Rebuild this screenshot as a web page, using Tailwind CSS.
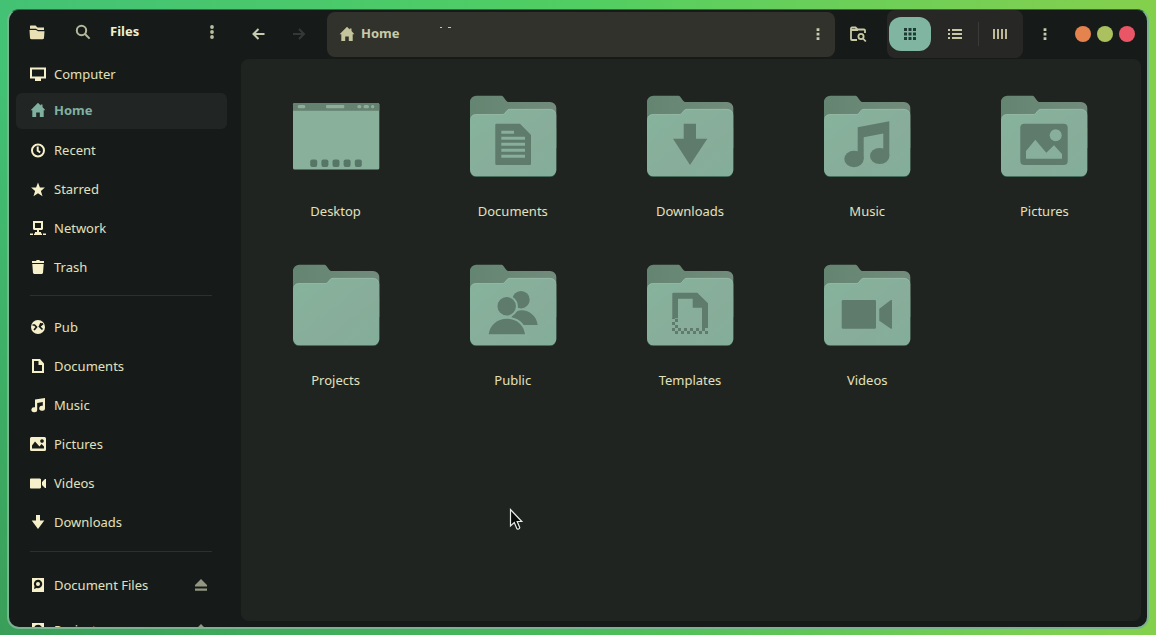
<!DOCTYPE html>
<html lang="en">
<head>
<meta charset="utf-8">
<title>Files</title>
<script src="https://cdn.jsdelivr.net/npm/@tailwindcss/browser@4"></script>
</head>
<body class="h-screen overflow-hidden bg-linear-to-r from-[#43c275] via-[#50ce62] to-[#84d04c] font-['Noto_Sans',sans-serif] text-[13px] leading-[18px] text-[#e2e1bd]">
<svg class="absolute size-0" aria-hidden="true">
  <defs>
    <linearGradient id="back" x1="0" x2="1"><stop offset="0" stop-color="#648571"/><stop offset="1" stop-color="#728b7c"/></linearGradient>
    <linearGradient id="front" x1="0" x2="1" y2="1"><stop offset="0" stop-color="#86b39c"/><stop offset=".6" stop-color="#88ad9a"/><stop offset="1" stop-color="#83ae99"/></linearGradient>
    <pattern id="check" x="30" y="59" width="6" height="6" patternUnits="userSpaceOnUse"><path fill="#5e7b6c" d="M0 0h3v3H0zM3 3h3v3H3z"/></pattern>
  </defs>
  <symbol id="folder" viewBox="0 0 96 96">
    <path fill="#33594a" d="M5 40h86.300v42.700a6.300 6.300 0 0 1-6.300 6.300H11.300A6.300 6.300 0 0 1 5 82.700z"/>
    <path fill="url(#back)" d="M5 14a6.300 6.300 0 0 1 6.300-6.300H36c1.500 0 2 .6 2.800 1.700l2 2.800c.9 1.200 1.600 1.800 3 1.800H85a6.300 6.300 0 0 1 6.300 6.300V60H5z"/>
    <path fill="url(#front)" d="M5 32a5.800 5.800 0 0 1 5.800-5.800H37c1.500 0 2.200-.5 3-1.500l2-2.300c.9-1 1.600-1.400 3-1.400h40a6.300 6.300 0 0 1 6.300 6.300V82a6.300 6.300 0 0 1-6.300 6.300H11.300A6.300 6.300 0 0 1 5 82z"/>
    <path fill="none" stroke="#9bbda9" stroke-width=".7" d="M6 29.500a5 5 0 0 1 4.800-3H37c1.500 0 2.200-.5 3-1.500l2-2.300c.9-1 1.600-1.400 3-1.400h40a6 6 0 0 1 5.500 3.500"/>
  </symbol>
  <symbol id="home" viewBox="0 0 16 16"><path fill="currentColor" d="M8 .8 .6 8.200h1.700V15h3.900v-4.500h3.600V15h3.900V8.200h1.700L12.500 5V2.500h-1.800v.9z"/></symbol>
  <symbol id="notes" viewBox="0 0 16 16"><path fill="currentColor" d="M5 2.500 15 1v10.200a2.900 2.500 0 1 1-2.200-2.400V5L7.200 6v6.700A2.900 2.500 0 1 1 5 10.300z"/></symbol>
  <symbol id="disk" viewBox="0 0 16 16"><path fill="currentColor" fill-rule="evenodd" d="M2 1h12v14H2zM8 2.800a4.200 4.200 0 0 0-3.500 6.500L4 12l2.800-1A4.200 4.200 0 1 0 8 2.800zM8 5a2 2 0 1 1 0 4 2 2 0 0 1 0-4z"/></symbol>
  <symbol id="eject" viewBox="0 0 16 16"><path fill="currentColor" d="M8 2 14 8v1.500H2V8zM2 11.500h12v2.200H2z"/></symbol>
  <symbol id="dots" viewBox="0 0 16 16"><g fill="currentColor"><circle cx="8" cy="3" r="1.900"/><circle cx="8" cy="8" r="1.900"/><circle cx="8" cy="13" r="1.900"/></g></symbol>
  <symbol id="dots-small" viewBox="0 0 16 16"><path fill="currentColor" d="M6.600 2.200h2.800V5H6.600zM6.600 6.800h2.800v2.700H6.600zM6.600 11.200h2.800V14H6.600z"/></symbol>
</svg>

<div class="h-full bg-linear-to-bl from-transparent from-55% to-[#2f7a3c]/50 pt-[9px] pr-[7px] pb-[6px] pl-[7px]">
<div class="flex h-full overflow-hidden rounded-xl border-2 border-t border-[#79b491] border-t-[#2c6a4d] bg-[#161b1a]">

  <aside class="flex w-[232px] shrink-0 flex-col">
    <header class="mb-[2px] flex h-11 shrink-0 items-center pl-5">
      <svg class="size-4 text-[#e9e1b5]" viewBox="0 0 16 16"><path fill="currentColor" d="M1.500 1.500h5l2 2H15V6H9L7 4.800H1V2zM.5 6H7l2 1.200h6.500L15 14a1.500 1.500 0 0 1-1.500 1.300h-11A1.500 1.500 0 0 1 1 14z"/></svg>
      <button class="ml-[30px] text-[#b3b79b]" aria-label="Search"><svg class="size-4" viewBox="0 0 16 16" fill="none" stroke="currentColor" stroke-width="2"><circle cx="6.500" cy="6.500" r="4.700"/><path d="m10 10 4.600 4.600"/></svg></button>
      <h1 class="ml-[19px] pb-[2px] font-bold text-[#f0f0cc]">Files</h1>
      <button class="mr-[21px] ml-auto text-[#b9bda0]" aria-label="Menu"><svg class="size-4"><use href="#dots"/></svg></button>
    </header>
    <nav class="min-h-0 flex-1 overflow-hidden pr-[14px] pl-[7px]" aria-label="Places">
      <ul class="flex flex-col gap-[3px] text-[#e2e1bd] [&_svg]:size-4 [&_svg]:shrink-0">
        <li class="-mb-[2px]"><a href="#" class="flex h-9 items-center gap-2 px-[14px]"><svg class="text-[#f6f0ca]" viewBox="0 0 16 16"><path fill="currentColor" fill-rule="evenodd" d="M0 1.500h16v11h-5V15H5v-2.500H0zM2 3.500v7h12v-7z"/></svg>Computer</a></li>
        <li><a href="#" aria-current="page" class="flex h-9 items-center gap-2 rounded-md bg-[#212524] px-[14px] pb-[2px] font-bold text-[#80b1a0]"><svg><use href="#home"/></svg>Home</a></li>
        <li><a href="#" class="flex h-9 items-center gap-2 px-[14px] pb-px"><svg class="text-[#f6f0ca]" viewBox="0 0 16 16" fill="none" stroke="currentColor" stroke-width="2"><circle cx="8" cy="8.500" r="6"/><path d="M7.700 4.500v4.300l2.500 1.500"/></svg>Recent</a></li>
        <li><a href="#" class="flex h-9 items-center gap-2 px-[14px] pb-px"><svg class="text-[#f6f0ca]" viewBox="0 0 16 16"><path fill="currentColor" d="m8 1.500 1.900 5h5l-4 3.400 1.600 5.300L8 12.200l-4.500 3 1.600-5.300-4-3.400h5z"/></svg>Starred</a></li>
        <li><a href="#" class="flex h-9 items-center gap-2 px-[14px] pb-px"><svg class="text-[#f6f0ca]" viewBox="0 0 16 16"><path fill="currentColor" fill-rule="evenodd" d="M3 1h10v8l-1 1H9v2h2v1.500h1V15H4v-1.500h1V12h2v-2H4L3 9zM5 3v5h6V3zM0 13.500h3V15H0zM13 13.500h3V15h-3z"/></svg>Network</a></li>
        <li><a href="#" class="flex h-9 items-center gap-2 px-[14px]"><svg class="text-[#f6f0ca]" viewBox="0 0 16 16"><path fill="currentColor" d="M2 2h4l.7-1h2.600l.7 1h4v2H2zM2.300 5h11.400l-.7 9-1 1H4l-1-1z"/></svg>Trash</a></li>
      </ul>
      <hr class="mt-[10px] mr-[15px] mb-[13px] ml-[14px] border-[#2c302e]">
      <ul class="flex flex-col gap-[3px] [&_svg]:size-4 [&_svg]:shrink-0 [&_svg]:text-[#f6f0ca]">
        <li><a href="#" class="flex h-9 items-center gap-2 px-[14px]"><svg viewBox="0 0 16 16"><circle cx="8" cy="8" r="7" fill="currentColor"/><path fill="none" stroke="#161b1a" stroke-width="1.700" d="M2.500 6h2l2 2-2 2.500M13 4.500l-3.500 3 3 3M6.500 8 4 11M9.500 7.500 11 4"/></svg>Pub</a></li>
        <li><a href="#" class="flex h-9 items-center gap-2 px-[14px]"><svg viewBox="0 0 16 16"><path fill="currentColor" fill-rule="evenodd" d="M2 1h8l4 4.500V15H2zM4 3v10h8V7H8.500V3z"/></svg>Documents</a></li>
        <li><a href="#" class="flex h-9 items-center gap-2 px-[14px]"><svg><use href="#notes"/></svg>Music</a></li>
        <li><a href="#" class="flex h-9 items-center gap-2 px-[14px]"><svg viewBox="0 0 16 16"><path fill="currentColor" fill-rule="evenodd" d="M1.500 1h13A1.500 1.500 0 0 1 16 2.500v11a1.500 1.500 0 0 1-1.500 1.500h-13A1.500 1.500 0 0 1 0 13.500v-11A1.500 1.500 0 0 1 1.500 1zM2 12.500h12V10.500l-2.500-2.500L9.500 10.500 5 5.500 2 9.500zM12 3.200a1.800 1.800 0 1 0 .01 0z"/></svg>Pictures</a></li>
        <li><a href="#" class="flex h-9 items-center gap-2 px-[14px]"><svg viewBox="0 0 16 16"><path fill="currentColor" d="M.5 3.500H10l1 .8v8.400l-1 .8H.5L0 12.700V4.300zM12 7l3-3h1v9h-1l-3-3z"/></svg>Videos</a></li>
        <li><a href="#" class="flex h-9 items-center gap-2 px-[14px]"><svg viewBox="0 0 16 16"><path fill="currentColor" d="M6 1h4v5.500h4.300L8 15 1.700 6.500H6z"/></svg>Downloads</a></li>
      </ul>
      <hr class="mt-[11px] mr-[15px] mb-[15px] ml-[14px] border-[#2c302e]">
      <ul class="flex flex-col gap-[9px] [&_svg]:size-4 [&_svg]:shrink-0">
        <li class="flex h-9 items-center px-[14px]"><a href="#" class="flex flex-1 items-center gap-2"><svg class="text-[#f6f0ca]"><use href="#disk"/></svg>Document Files</a><button class="mr-1 text-[#939680]" aria-label="Eject Document Files"><svg><use href="#eject"/></svg></button></li>
        <li class="flex h-9 items-center px-[14px]"><a href="#" class="flex flex-1 items-center gap-2"><svg class="text-[#f6f0ca]"><use href="#disk"/></svg>Projects</a><button class="mr-1 text-[#939680]" aria-label="Eject Projects"><svg><use href="#eject"/></svg></button></li>
      </ul>
    </nav>
  </aside>

  <div class="flex min-w-0 flex-1 flex-col pr-[6px] pb-[6px]">
    <header class="mb-px flex h-12 shrink-0 items-center">
      <button class="flex size-9 items-center justify-center text-[#c6cbb0]" aria-label="Back"><svg class="size-4" viewBox="0 0 16 16" fill="none" stroke="currentColor" stroke-width="2"><path d="M13.500 8H3M7.500 3l-5 5 5 5"/></svg></button>
      <button class="ml-1 flex size-9 items-center justify-center text-[#343937]" aria-label="Forward" disabled><svg class="size-4" viewBox="0 0 16 16" fill="none" stroke="currentColor" stroke-width="2"><path d="M2 8h10.500M8 3l5 5-5 5"/></svg></button>
      <div class="relative ml-[10px] flex h-[45px] flex-1 items-center rounded-lg bg-[#32322d] pr-[9px] pl-3">
        <svg class="size-4 text-[#c4c49d]"><use href="#home"/></svg>
        <span class="ml-[6px] pb-[2px] font-bold text-[#c8cba8]">Home</span>
        <svg class="absolute top-[15px] left-[113px] h-px w-[11px]" viewBox="0 0 11 1"><path fill="#c8cba8" d="M0 0h2v1H0zM8 0h3v1H8z"/></svg>
        <button class="ml-auto text-[#c6cbb0]" aria-label="Location menu"><svg class="size-4"><use href="#dots-small"/></svg></button>
      </div>
      <button class="ml-[14px] text-[#c9cba3]" aria-label="Search folders"><svg class="size-[18px]" viewBox="0 0 18 18" fill="none" stroke="currentColor" stroke-width="1.800"><path d="M8 15H3a1 1 0 0 1-1-1V3.500a1 1 0 0 1 1-1h3.500l2 2H15a1 1 0 0 1 1 1V8"/><circle cx="12" cy="11.500" r="2.600"/><path d="m14 13.500 2.800 3M2 5h7"/></svg></button>
      <div class="ml-5 flex h-12 w-[136px] shrink-0 items-center rounded-lg bg-[#272726] pl-[2px]">
        <button class="flex h-[34px] w-[42px] items-center justify-center rounded-xl bg-[#80b5a2] text-[#1f3a33]" aria-label="Icon view" aria-pressed="true"><svg class="size-4" viewBox="0 0 16 16"><path fill="currentColor" d="M2 2h3v3H2zM6.500 2h3v3h-3zM11 2h3v3h-3zM2 6.500h3v3H2zM6.500 6.500h3v3h-3zM11 6.500h3v3h-3zM2 11h3v3H2zM6.500 11h3v3h-3zM11 11h3v3h-3z"/></svg></button>
        <button class="flex h-[34px] w-[47px] items-center justify-center text-[#c6c8a4]" aria-label="List view"><svg class="size-4" viewBox="0 0 16 16"><path fill="currentColor" d="M1 3h2v2H1zM5 3h10v2H5zM1 7h2v2H1zM5 7h10v2H5zM1 11h2v2H1zM5 11h10v2H5z"/></svg></button>
        <span class="h-6 w-px bg-[#3b3c38]"></span>
        <button class="flex h-[34px] w-[42px] items-center justify-center text-[#bdb994]" aria-label="Column view"><svg class="size-4" viewBox="0 0 16 16"><path fill="currentColor" d="M1 3h2v10H1zM5 3h2v10H5zM9 3h2v10H9zM13 3h2v10h-2z"/></svg></button>
      </div>
      <button class="ml-[14px] text-[#c6cbb0]" aria-label="More options"><svg class="size-4"><use href="#dots-small"/></svg></button>
      <div class="mr-[6px] ml-[22px] flex gap-[6px]">
        <button class="size-4 rounded-full bg-[#e5834f]" aria-label="Minimize"></button>
        <button class="size-4 rounded-full bg-[#abc15f]" aria-label="Maximize"></button>
        <button class="size-4 rounded-full bg-[#ea5666]" aria-label="Close"></button>
      </div>
    </header>

    <main class="min-h-0 flex-1 overflow-hidden rounded-lg bg-[#202421] pt-[29px] pr-2 pl-[6px]">
      <ul class="grid grid-cols-5 [&_a]:flex [&_a]:flex-col [&_a]:items-center [&_a]:gap-[18px] [&_a]:pb-[37px] [&_svg]:size-24">
        <li><a href="#"><svg viewBox="0 0 96 96"><rect x="5" y="15" width="86.300" height="66.500" rx="1.500" fill="#88b09b"/><path fill="#64826f" d="M5 22.700V16.500A1.500 1.500 0 0 1 6.500 15h83.300a1.500 1.500 0 0 1 1.500 1.500v6.200z"/><g fill="#8eae9b"><rect x="9.700" y="17" width="7.600" height="3.300" rx="1.500"/><rect x="38" y="17" width="18.300" height="3.300" rx="1"/><rect x="69.300" y="17" width="4" height="3.300" rx="1.500"/><rect x="75.500" y="17" width="5.500" height="3.300" rx="1.500"/><rect x="83" y="17" width="3.300" height="3.300" rx="1.500"/></g><g fill="#577766"><rect x="22.200" y="71.500" width="7" height="7.500" rx="2"/><rect x="33.400" y="71.500" width="7" height="7.500" rx="2"/><rect x="44.500" y="71.500" width="7" height="7.500" rx="2"/><rect x="55.600" y="71.500" width="7" height="7.500" rx="2"/><rect x="66.800" y="71.500" width="7" height="7.500" rx="2"/></g></svg>Desktop</a></li>
        <li><a href="#"><svg viewBox="0 0 96 96"><use href="#folder"/><path fill="#5e7b6c" d="M31.500 35.700H55L66 47v29a1 1 0 0 1-1 1H31.500a1.200 1.200 0 0 1-1.200-1.200V37a1.200 1.200 0 0 1 1.200-1.300z"/><path stroke="#88af9b" stroke-width="3" d="M36.300 44.300H49M36.300 50.300H60M36.300 56.300H60M36.300 62.300H60M36.300 68.300H60"/></svg>Documents</a></li>
        <li><a href="#"><svg viewBox="0 0 96 96"><use href="#folder"/><path fill="#5e7b6c" d="M41.700 35.700H54v15h11.300L48 77 31 50.700h10.700z"/></svg>Downloads</a></li>
        <li><a href="#"><svg viewBox="0 0 96 96"><use href="#folder"/><g fill="#5e7b6c"><ellipse cx="35" cy="71" rx="9.700" ry="8.200"/><ellipse cx="60.700" cy="68" rx="9.700" ry="8"/><path d="M38.700 39.300 70.300 33.300V68h-6V45.500L44.700 49.300V71h-6z"/></g></svg>Music</a></li>
        <li><a href="#"><svg viewBox="0 0 96 96"><use href="#folder"/><rect x="24.300" y="35.700" width="47.400" height="41.300" rx="4" fill="#5e7b6c"/><g fill="#88af9b"><circle cx="59.700" cy="47.300" r="6"/><path d="M30 70.700V63l9.300-11.300 11 13L58 57.300l8 8.700v4.700z"/></g></svg>Pictures</a></li>
        <li><a href="#"><svg viewBox="0 0 96 96"><use href="#folder"/></svg>Projects</a></li>
        <li><a href="#"><svg viewBox="0 0 96 96"><use href="#folder"/><g fill="#5e7b6c"><circle cx="56" cy="42.700" r="8.700"/><path d="M45 68c0-9 5-14.700 12-14.700S71.500 59 72.700 68z"/></g><g fill="#5e7b6c" stroke="#88af9b" stroke-width="4" paint-order="stroke"><path d="M23.700 77.300c1-9 8.300-15.600 18.200-15.600S59 68.300 60 77.300z"/><circle cx="41.700" cy="49.300" r="9.200"/></g></svg>Public</a></li>
        <li><a href="#"><svg viewBox="0 0 96 96"><use href="#folder"/><path fill="#5e7b6c" d="M30.300 61.300V37a1.300 1.300 0 0 1 1.300-1.300H55.300L66 46.300V71h-6V50.700h-9.300v-9H36v19.600z"/><path fill="url(#check)" d="M30 61h6v10h30v6H30z"/></svg>Templates</a></li>
        <li><a href="#"><svg viewBox="0 0 96 96"><use href="#folder"/><path fill="#5e7b6c" d="M24 43h31.700a1.300 1.300 0 0 1 1.300 1.300v26.100a1.300 1.300 0 0 1-1.300 1.300H24a1.300 1.300 0 0 1-1.300-1.300V44.300A1.300 1.300 0 0 1 24 43zM60.300 51.700 71.500 43.200 73 43v28.700l-1.500-.2-11.200-7.800z"/></svg>Videos</a></li>
      </ul>
    </main>
  </div>
</div>
</div>
<svg class="pointer-events-none absolute top-[508px] left-[509px] h-[23px] w-[15px]" viewBox="0 0 15 23" aria-hidden="true"><path fill="#080a09" stroke="#e8ebe9" stroke-width="1.200" d="M1.500 1.500v16.500l3.800-3.500 2.600 6.200c.6 1 3 .2 2.800-1.200L8.200 13.500h4.600z"/></svg>
</body>
</html>
